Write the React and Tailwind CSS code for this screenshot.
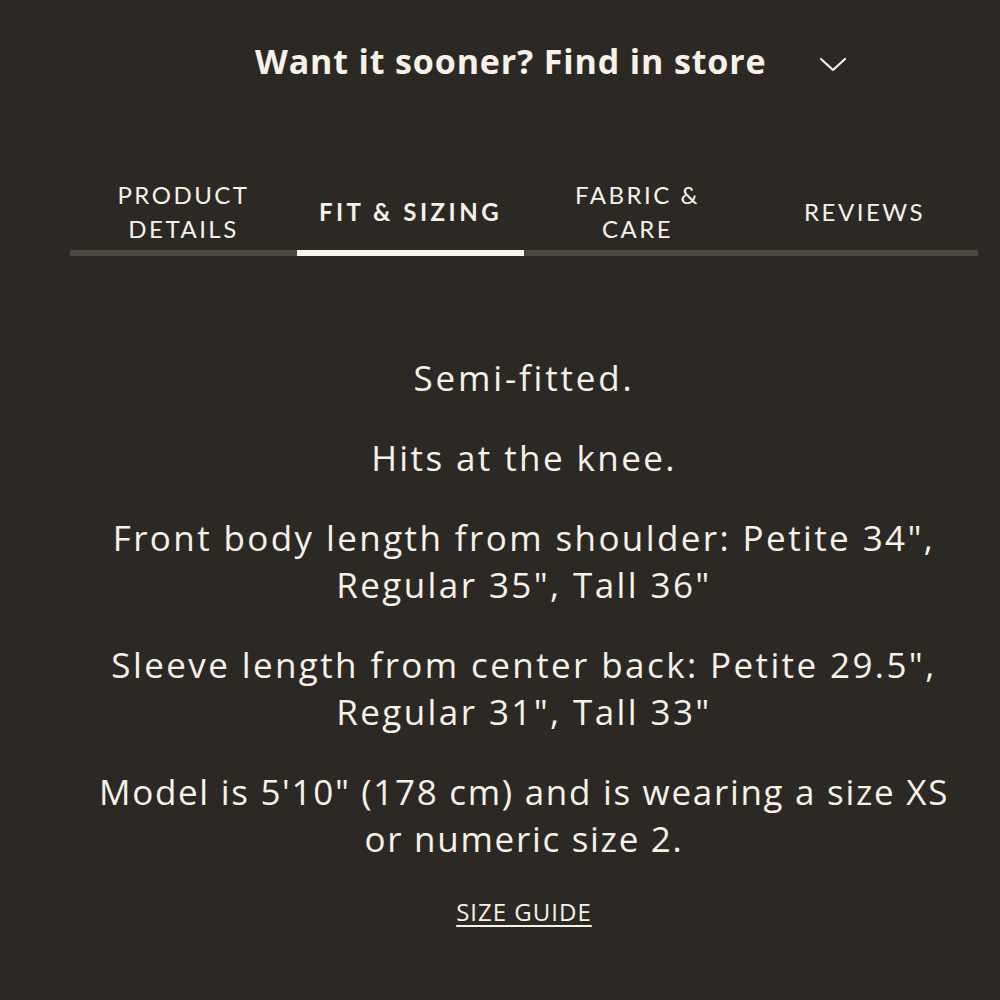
import React from "react";

const paras = [
  { lines: ["Semi-fitted."], cls: "tracking-[2.8px]" },
  { lines: ["Hits at the knee."], cls: "tracking-[2.4px]" },
  { lines: ["Front body length from shoulder: Petite 34\",", "Regular 35\", Tall 36\""], cls: "tracking-[2.4px]" },
  { lines: ["Sleeve length from center back: Petite 29.5\",", "Regular 31\", Tall 33\""], cls: "tracking-[2.4px]" },
  { lines: ["Model is 5'10\" (178 cm) and is wearing a size XS", "or numeric size 2."], cls: "tracking-[1.7px]" },
];

export default function App() {
  return (
    <div
      className="w-[1000px] h-[1000px] bg-[#2c2924] text-[#f6f2ea] overflow-hidden"
      style={{ fontFamily: "'Open Sans', Lato, sans-serif" }}
    >
      <div className="flex items-center h-[124px] pb-[2px] pl-[255px]">
        <span className="text-[34px] font-bold tracking-[0.85px]">Want it sooner? Find in store</span>
        <svg className="ml-[53px] mt-[6px]" width="28" height="16" viewBox="0 0 28 16" fill="none">
          <path d="M2 3 L14 14 L26 3" stroke="#f6f2ea" strokeWidth="2.2" strokeLinecap="round" strokeLinejoin="round" />
        </svg>
      </div>

      <div className="ml-[70px] w-[908px] mt-[50px]">
        <div
          className="grid grid-cols-4 text-[24px] tracking-[2.5px] leading-[34px] text-center uppercase"
          style={{ fontFamily: "Lato, sans-serif" }}
        >
          <div className="flex items-center justify-center h-[76px]">Product<br />Details</div>
          <div className="flex items-center justify-center h-[76px] font-bold tracking-[3.5px]">Fit &amp; Sizing</div>
          <div className="flex items-center justify-center h-[76px]">Fabric &amp;<br />Care</div>
          <div className="flex items-center justify-center h-[76px]">Reviews</div>
        </div>
        <div className="grid grid-cols-4 h-[6px] bg-[#4a4640]">
          <div />
          <div className="bg-[#f8f5ee]" />
        </div>

        <div className="mt-[98px] flex flex-col items-center gap-[33px] text-[35px] leading-[47px] text-center">
          {paras.map((p, i) => (
            <p key={i} className={"whitespace-nowrap " + p.cls}>
              {p.lines.map((l, j) => (
                <React.Fragment key={j}>
                  {j > 0 && <br />}
                  {l}
                </React.Fragment>
              ))}
            </p>
          ))}
        </div>

        <div className="mt-[32px] text-center">
          <a className="text-[24px] underline underline-offset-[4px] decoration-[1.5px] tracking-[1px]">SIZE GUIDE</a>
        </div>
      </div>
    </div>
  );
}
